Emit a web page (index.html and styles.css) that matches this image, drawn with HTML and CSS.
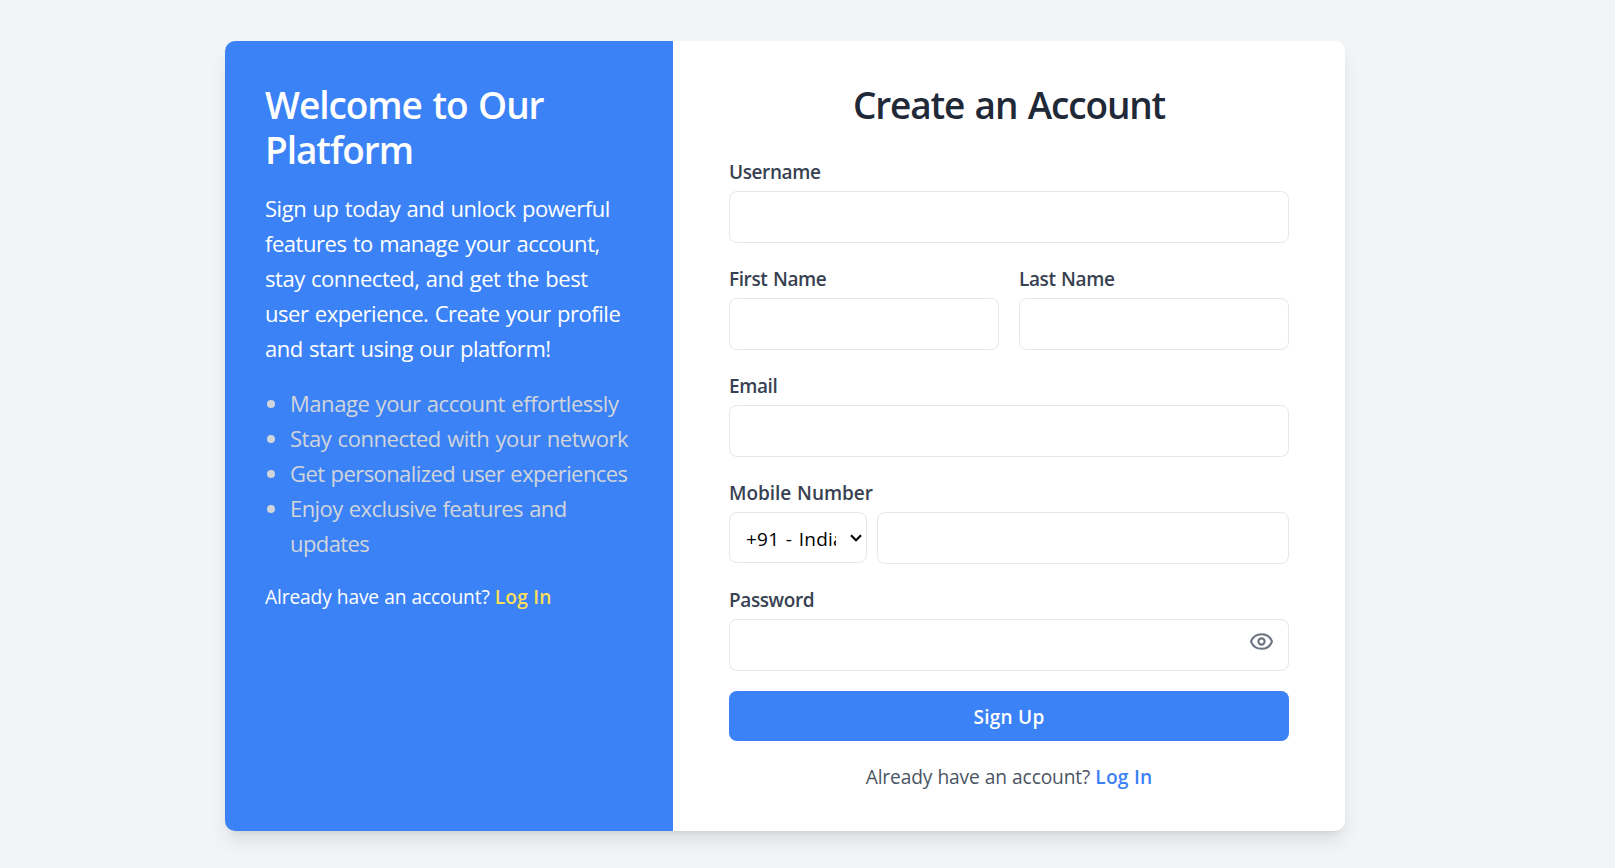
FILE: index.html
```html
<!DOCTYPE html>
<html lang="en">
<head>
<meta charset="utf-8">
<title>Create an Account</title>
<link rel="stylesheet" href="styles.css">
</head>
<body>
<main class="card">
  <section class="intro">
    <h2 class="title">Welcome to Our Platform</h2>
    <p class="lead">Sign up today and unlock powerful features to manage your account, stay connected, and get the best user experience. Create your profile and start using our platform!</p>
    <ul class="features">
      <li>Manage your account effortlessly</li>
      <li>Stay connected with your network</li>
      <li class="tight">Get personalized user experiences</li>
      <li class="tight">Enjoy exclusive features and updates</li>
    </ul>
    <p class="note">Already have an account? <a class="link link-yellow" href="#">Log In</a></p>
  </section>
  <section class="signup">
    <h2 class="title title-dark">Create an Account</h2>
    <form class="form">
      <div class="field">
        <label class="label" for="username">Username</label>
        <input class="input" id="username" type="text">
      </div>
      <div class="row">
        <div class="field">
          <label class="label" for="first">First Name</label>
          <input class="input" id="first" type="text">
        </div>
        <div class="field">
          <label class="label" for="last">Last Name</label>
          <input class="input" id="last" type="text">
        </div>
      </div>
      <div class="field">
        <label class="label" for="email">Email</label>
        <input class="input" id="email" type="email">
      </div>
      <div class="field">
        <label class="label label-wide" for="mobile">Mobile Number</label>
        <div class="phone">
          <div class="code">
            <select class="select" aria-label="Country code"><option>+91 - India</option></select>
            <svg class="chevron" viewBox="0 0 12 8" fill="none" stroke="#000" stroke-width="2.2"><path d="M1 1.3l5 5 5-5"/></svg>
          </div>
          <input class="input" id="mobile" type="tel">
        </div>
      </div>
      <div class="field">
        <label class="label" for="password">Password</label>
        <div class="secret">
          <input class="input" id="password" type="password">
          <svg class="eye" viewBox="0 0 24 24" fill="none" stroke="currentColor" stroke-width="2" stroke-linecap="round" stroke-linejoin="round"><path d="M2.062 12.348a1 1 0 0 1 0-.696 10.75 10.75 0 0 1 19.876 0 1 1 0 0 1 0 .696 10.75 10.75 0 0 1-19.876 0"/><circle cx="12" cy="12" r="3"/></svg>
        </div>
      </div>
      <button class="button" type="button">Sign Up</button>
    </form>
    <p class="note note-center">Already have an account? <a class="link link-blue" href="#">Log In</a></p>
  </section>
</main>
</body>
</html>
```
FILE: styles.css
```css
* { box-sizing: border-box; margin: 0; padding: 0; }
body {
  min-height: 868px;
  padding-top: 41px;
  background: #f3f4f6;
  font-family: "Open Sans", "Noto Sans", sans-serif;
  font-size: 19px;
  line-height: 30px;
  overflow: hidden;
}
.card {
  display: flex;
  width: 1120px;
  height: 790px;
  margin-left: 225px;
  background: #fff;
  border-radius: 10px;
  overflow: hidden;
  box-shadow: 0 12.5px 18.75px -3.75px rgba(0,0,0,.1), 0 5px 7.5px -5px rgba(0,0,0,.1);
}
.intro { width: 448px; padding: 40px; background: #3b82f6; color: #fff; }
.signup { flex: 1; padding: 40px 56px; }
.title {
  padding-top: 1px;
  margin-bottom: 19px;
  font-size: 37px;
  line-height: 45px;
  font-weight: 600;
  letter-spacing: -1.05px;
  word-spacing: 2px;
}
.title-dark { margin-bottom: 29px; color: #1f2937; text-align: center; letter-spacing: -1.15px; }
.lead, .features { margin-bottom: 20px; font-size: 22px; line-height: 35px; letter-spacing: -0.46px; word-spacing: 1px; }
.features { padding-left: 25px; color: #d1d5db; letter-spacing: -0.45px; }
.features .tight { letter-spacing: -0.58px; }
.note { padding-top: 1px; font-size: 19.2px; letter-spacing: -0.14px; word-spacing: 0.3px; }
.note-center { margin-top: 20px; color: #4b5563; text-align: center; }
.link { font-weight: 600; letter-spacing: 0.15px; text-decoration: none; }
.link-yellow { color: #fbdf58; }
.link-blue { color: #3b82f6; }
.form { display: flex; flex-direction: column; gap: 20px; }
.field { display: flex; flex-direction: column; gap: 5px; flex: 1; min-width: 0; }
.row { display: flex; gap: 20px; }
.label { padding-top: 1px; margin-bottom: -1px; color: #374151; font-weight: 600; letter-spacing: -0.4px; word-spacing: 1px; }
.label-wide { letter-spacing: -0.05px; }
.input {
  width: 100%;
  height: 52px;
  padding: 0 15px;
  border: 1px solid #e5e7eb;
  border-radius: 8px;
  background: #fff;
  font: inherit;
}
.phone { display: flex; gap: 10px; }
.code { position: relative; flex: 0 0 138px; height: 51px; }
.select {
  width: 100%;
  height: 100%;
  padding: 2px 30px 0 16px;
  appearance: none;
  border: 1px solid #e5e7eb;
  border-radius: 8px;
  background: #fff;
  color: #000;
  font: inherit;
  letter-spacing: 0.2px;
  word-spacing: 1.5px;
}
.chevron { position: absolute; right: 5px; top: 22px; width: 12px; height: 8px; }
.secret { position: relative; }
.eye { position: absolute; right: 15px; top: 10px; width: 25px; height: 25px; color: #6b7280; }
.button {
  height: 50px;
  padding-top: 2px;
  border: 0;
  border-radius: 8px;
  background: #3b82f6;
  color: #fff;
  font: inherit;
  font-weight: 600;
  letter-spacing: 0.25px;
}
```
